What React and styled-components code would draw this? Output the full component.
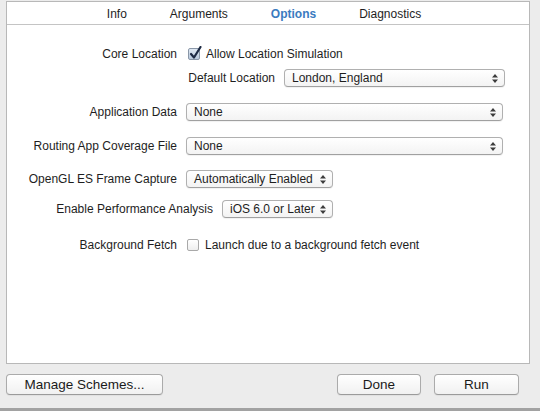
import styled, { createGlobalStyle } from 'styled-components';

const GlobalStyle = createGlobalStyle`
    html, body {
        margin: 0;
        padding: 0;
        background: #ececec;
    }
    body {
        font-family: "Liberation Sans", Arial, sans-serif;
        color: #1e1e1e;
    }
`;

const Page = styled.div`
    box-sizing: border-box;
    width: 540px;
    height: 411px;
    padding: 1px 10px 0 6px;
    display: flex;
    flex-direction: column;
    background: #ececec;
    box-shadow: inset 0 -3px 0 #a2a2a2;
`;

const Panel = styled.div`
    box-sizing: border-box;
    height: 363px;
    background: #fff;
    border: 1px solid #b8b8b8;
    display: flex;
    flex-direction: column;
`;

const TabBar = styled.div`
    height: 22px;
    border-bottom: 1px solid #c4c4c4;
    display: flex;
    align-items: center;
    justify-content: center;
    gap: 43px;
    padding-right: 8px;
    font-size: 12px;
`;

const Tab = styled.span`
    color: ${(p) => (p.$active ? '#3a7bbf' : '#1e1e1e')};
    font-weight: ${(p) => (p.$active ? 'bold' : 'normal')};
    padding-top: 1px;
`;

const Form = styled.div`
    display: flex;
    flex-direction: column;
    padding-top: 19px;
`;

const Row = styled.div`
    display: flex;
    align-items: center;
    height: 20px;
    gap: 9px;
    margin-top: ${(p) => p.$top || 0}px;
    font-size: 12px;
`;

const Label = styled.div`
    width: ${(p) => p.$width || 170}px;
    text-align: right;
    white-space: nowrap;
`;

const SelectBox = styled.div`
    box-sizing: border-box;
    position: relative;
    width: ${(p) => p.$width}px;
    height: 18px;
    padding: 0 18px 0 7px;
    display: flex;
    align-items: center;
    border: 1px solid #b0b0b0;
    border-bottom-color: #a0a0a0;
    border-radius: 4px;
    background: linear-gradient(#ffffff, #f3f3f3);
    box-shadow: 0 1px 1px rgba(0, 0, 0, 0.06);
    white-space: nowrap;
`;

const Arrows = styled.svg`
    position: absolute;
    right: 6px;
    top: 4px;
`;

const Check = styled.span`
    display: flex;
    align-items: center;
    gap: 6px;
    margin-left: ${(p) => p.$shift || 0}px;
`;

const Box = styled.span`
    box-sizing: border-box;
    position: relative;
    width: 12px;
    height: 12px;
    border: 1px solid ${(p) => (p.$checked ? '#8a97a8' : '#a9a9a9')};
    border-radius: 2px;
    background: ${(p) =>
        p.$checked
            ? 'linear-gradient(#dfe8f3, #b9c9dd)'
            : 'linear-gradient(#ffffff, #eeeeee)'};
`;

const Tick = styled.svg`
    position: absolute;
    left: 0;
    top: -3px;
`;

const Footer = styled.div`
    display: flex;
    align-items: center;
    gap: 13px;
    margin-top: 10px;
    padding-right: 11px;
`;

const Button = styled.button`
    box-sizing: border-box;
    width: ${(p) => p.$width}px;
    height: 21px;
    margin-right: ${(p) => (p.$push ? 'auto' : '0')};
    padding: 0;
    border: 1px solid #ababab;
    border-bottom-color: #9b9b9b;
    border-radius: 4px;
    background: linear-gradient(#ffffff, #f1f1f1);
    box-shadow: 0 1px 1px rgba(0, 0, 0, 0.05);
    font-family: "Liberation Sans", Arial, sans-serif;
    font-size: 13.5px;
    color: #1a1a1a;
`;

const Select = ({ width, children }) => (
    <SelectBox $width={width}>
        {children}
        <Arrows width="6" height="9" viewBox="0 0 6 9">
            <path d="M3 0 L6 3.4 H0 Z M3 9 L6 5.6 H0 Z" fill="#3c3c3c" />
        </Arrows>
    </SelectBox>
);

const Checkbox = ({ checked, children, shift }) => (
    <Check $shift={shift}>
        <Box $checked={checked}>
            {checked && (
                <Tick width="13" height="14" viewBox="0 0 13 14">
                    <path
                        d="M2 8 L5 11.5 L11.5 1"
                        fill="none"
                        stroke="#1d2a44"
                        strokeWidth="2.2"
                        strokeLinecap="round"
                        strokeLinejoin="round"
                    />
                </Tick>
            )}
        </Box>
        {children}
    </Check>
);

const App = () => {
    return (
        <>
            <GlobalStyle />
            <Page>
                <Panel>
                    <TabBar>
                        <Tab>Info</Tab>
                        <Tab>Arguments</Tab>
                        <Tab $active>Options</Tab>
                        <Tab>Diagnostics</Tab>
                    </TabBar>

                    <Form>
                        <Row>
                            <Label>Core Location</Label>
                            <Checkbox checked shift={2}>Allow Location Simulation</Checkbox>
                        </Row>
                        <Row $top={4}>
                            <Label $width={268}>Default Location</Label>
                            <Select width={221}>London, England</Select>
                        </Row>
                        <Row $top={14}>
                            <Label>Application Data</Label>
                            <Select width={317}>None</Select>
                        </Row>
                        <Row $top={14}>
                            <Label>Routing App Coverage File</Label>
                            <Select width={317}>None</Select>
                        </Row>
                        <Row $top={13}>
                            <Label>OpenGL ES Frame Capture</Label>
                            <Select width={147}>Automatically Enabled</Select>
                        </Row>
                        <Row $top={10}>
                            <Label $width={206}>Enable Performance Analysis</Label>
                            <Select width={111}>iOS 6.0 or Later</Select>
                        </Row>
                        <Row $top={16}>
                            <Label>Background Fetch</Label>
                            <Checkbox shift={1}>Launch due to a background fetch event</Checkbox>
                        </Row>
                    </Form>
                </Panel>

                <Footer>
                    <Button $width={157} $push>Manage Schemes...</Button>
                    <Button $width={84}>Done</Button>
                    <Button $width={85}>Run</Button>
                </Footer>
            </Page>
        </>
    );
};

export default App;
